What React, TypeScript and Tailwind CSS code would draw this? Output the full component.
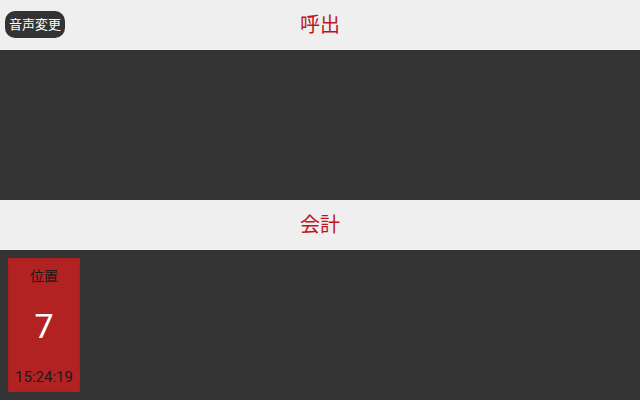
export default function App() {
  return (
    <div className="flex h-[400px] w-[640px] flex-col bg-[#333333] font-['Roboto','Noto_Sans_CJK_JP',sans-serif]">
      <header className="relative flex h-[50px] items-center justify-center bg-[#efefef]">
        <button className="absolute left-[5px] top-[11px] h-[27px] rounded-[10px] bg-[#333333] px-[4px] text-[13px] leading-none text-white">
          音声変更
        </button>
        <h1 className="text-[20px] text-[#c0141a]">呼出</h1>
      </header>
      <div className="h-[150px]" />
      <header className="flex h-[50px] items-center justify-center bg-[#efefef]">
        <h1 className="text-[20px] text-[#c0141a]">会計</h1>
      </header>
      <div className="flex flex-1 items-start p-2">
        <div className="flex h-[134px] w-[72px] flex-col items-center justify-between border border-[#a82020] bg-[#b22222] pb-[3px] pt-[7px]">
          <span className="text-[14px] text-[#1a1a1a]">位置</span>
          <span className="text-[34px] leading-none text-white">7</span>
          <span className="text-[15px] text-[#1a1a1a]">15:24:19</span>
        </div>
      </div>
    </div>
  )
}
